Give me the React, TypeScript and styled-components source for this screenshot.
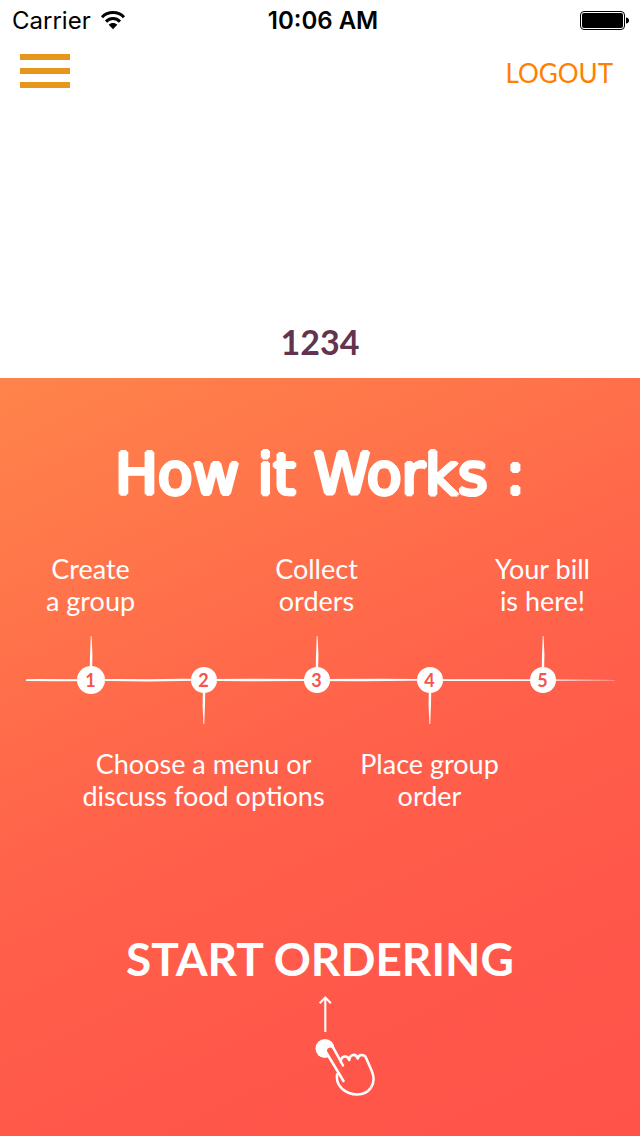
import React from "react";
import styled, { createGlobalStyle } from "styled-components";

const GlobalStyle = createGlobalStyle`
  *, *::before, *::after { box-sizing: border-box; }
  body { margin: 0; background: #ffffff; }
  button { border: 0; padding: 0; background: none; cursor: pointer; }
`;

const lato = `Lato, "Open Sans", sans-serif`;

const Screen = styled.div`
  display: flex;
  flex-direction: column;
  min-height: 100vh;
  font-family: ${lato};
`;

const StatusBar = styled.div`
  display: grid;
  grid-template-columns: 1fr auto 1fr;
  align-items: center;
  height: 42px;
  padding: 0 10px 0 12px;
  font: 400 24px/42px Inter, sans-serif;
  color: #000000;
`;

const Carrier = styled.div`
  display: flex;
  align-items: center;
  gap: 9px;
`;

const Clock = styled.time`
  padding-left: 4px;
  font-weight: 600;
`;

const Battery = styled.svg`
  justify-self: end;
`;

const NavBar = styled.header`
  display: flex;
  align-items: center;
  justify-content: space-between;
  height: 62px;
  padding: 0 27px 0 20px;
`;

const MenuButton = styled.button`
  display: flex;
  flex-direction: column;
  gap: 8px;
  width: 50px;
  margin-bottom: 4px;
`;

const MenuBar = styled.span`
  height: 6px;
  background: #e8951c;
`;

const LogoutButton = styled.button`
  font: 400 26px/32px ${lato};
  color: #ff8000;
`;

const GroupCode = styled.p`
  margin: 213px 0 0;
  padding-bottom: 11px;
  font-size: 34px;
  font-weight: 700;
  line-height: 50px;
  text-align: center;
  color: #633350;
`;

const Panel = styled.main`
  flex: 1;
  display: flex;
  flex-direction: column;
  align-items: center;
  padding: 60px 0 40px;
  color: #ffffff;
  background: linear-gradient(155deg, #ff844a 0%, #ff614a 50%, #ff564a 80%, #ff5349 100%);
`;

/* The ring of shadows thickens the strokes and rounds off their ends. */
const Title = styled.h1`
  margin: 0;
  font: 400 57px/72px "DejaVu Sans", Verdana, sans-serif;
  text-shadow:
    2px 0 #ffffff, -2px 0 #ffffff, 0 2px #ffffff, 0 -2px #ffffff,
    1px 1px #ffffff, -1px 1px #ffffff, 1px -1px #ffffff, -1px -1px #ffffff;
`;

const Steps = styled.ol`
  align-self: stretch;
  display: grid;
  grid-template-columns: repeat(5, minmax(0, 1fr));
  grid-template-rows: auto 88px auto;
  margin: 0;
  padding: 43px 41px 0 34px;
  list-style: none;
`;

const Rail = styled.li`
  grid-area: 2 / 1 / 3 / -1;
  align-self: center;
  height: 4px;
  margin: 0 -16px 0 -8px;

  svg {
    display: block;
    width: 100%;
    height: 100%;
  }
`;

const Step = styled.li<{ $column: number }>`
  grid-column: ${(p) => p.$column};
  grid-row: 1 / -1;
  display: grid;
  grid-template-columns: minmax(0, 1fr);
  grid-template-rows: subgrid;
  justify-items: center;
`;

const StepLabel = styled.span<{ $below: boolean }>`
  grid-row: ${(p) => (p.$below ? 3 : 1)};
  width: max-content;
  padding: ${(p) => (p.$below ? "24px 0 0" : "0 0 19px")};
  font-size: 27px;
  line-height: 32px;
  text-align: center;
  white-space: pre-line;
`;

const Marker = styled.span<{ $below: boolean }>`
  grid-row: 2;
  display: flex;
  flex-direction: ${(p) => (p.$below ? "column" : "column-reverse")};
  align-items: center;
  align-self: ${(p) => (p.$below ? "end" : "start")};
`;

const Badge = styled.span<{ $large: boolean }>`
  width: ${(p) => (p.$large ? 28 : 26)}px;
  margin: ${(p) => (p.$large ? "-1px" : "0")};
  border-radius: 50%;
  background: #ffffff;
  color: #f4554d;
  font-size: 18px;
  font-weight: 700;
  line-height: ${(p) => (p.$large ? 28 : 26)}px;
  text-align: center;
`;

const Stem = styled.svg<{ $below: boolean }>`
  display: block;
  width: 4px;
  height: 31px;
  transform: ${(p) => (p.$below ? "rotate(180deg)" : "none")};
`;

const StartButton = styled.button`
  display: flex;
  flex-direction: column;
  align-items: center;
  gap: 6px;
  margin-top: 117px;
  color: #ffffff;
  font: 700 46px/60px ${lato};
`;

const SwipeIcon = styled.svg`
  display: block;
  margin-left: 50px;
`;

const steps = [
  "Create\na group",
  "Choose a menu or\ndiscuss food options",
  "Collect\norders",
  "Place group\norder",
  "Your bill\nis here!",
];

export default function App() {
  return (
    <Screen>
      <GlobalStyle />
      <StatusBar>
        <Carrier>
          Carrier
          <svg width="26" height="20" viewBox="0 0 26 20" aria-label="Wi-Fi">
            <path d="M2 6.200C8 0 18 0 24 6.200" fill="none" stroke="#000" strokeWidth="3" />
            <path d="M6 10.600c4-4 10-4 14 0" fill="none" stroke="#000" strokeWidth="3" />
            <path d="M8.700 13.800c2.400-2.400 6.200-2.400 8.600 0L13 18.200z" fill="#000" />
          </svg>
        </Carrier>
        <Clock>10:06 AM</Clock>
        <Battery width="50" height="20" viewBox="0 0 50 20" aria-label="Battery full">
          <rect x="0.500" y="0.500" width="44" height="18" rx="3.500" fill="none" stroke="#000" />
          <rect x="2" y="2" width="41" height="15" rx="2" fill="#000" />
          <path d="M46 6.500c2 0 3 1.400 3 3s-1 3-3 3z" fill="#000" />
        </Battery>
      </StatusBar>
      <NavBar>
        <MenuButton aria-label="Menu">
          <MenuBar />
          <MenuBar />
          <MenuBar />
        </MenuButton>
        <LogoutButton>LOGOUT</LogoutButton>
      </NavBar>
      <GroupCode>1234</GroupCode>
      <Panel>
        <Title>How it Works :</Title>
        <Steps>
          <Rail aria-hidden="true">
            <svg viewBox="0 0 588 4" preserveAspectRatio="none">
              <path
                d="M0 1.200L12 1l40 .2 40-.3 30 .4 34-.6 30 .4 40-.4 60 .4 70-.4 60 .5 70 .1 40 .3 62 .4 0 .3-62 .5-40 .2-60 .1-40-.4-50 .6-60-.4-56 .4-50-.5-48 .6-40-.5-50 .3-40-.3L0 2.800z"
                fill="#fff"
              />
            </svg>
          </Rail>
          {steps.map((label, i) => {
            const below = i % 2 === 1;
            return (
              <Step key={label} $column={i + 1}>
                <StepLabel $below={below}>{label}</StepLabel>
                <Marker $below={below}>
                  <Badge $large={i === 0}>{i + 1}</Badge>
                  <Stem $below={below} viewBox="0 0 4 31" aria-hidden="true">
                    <path d="M1.700 0h.8l.5 10 .4 8-.2 13H.8L1 19l.4-9z" fill="#fff" />
                  </Stem>
                </Marker>
              </Step>
            );
          })}
        </Steps>
        <StartButton>
          START ORDERING
          <SwipeIcon width="60" height="102" viewBox="0 0 60 102" fill="none" aria-hidden="true">
            <path d="M10.300 37V2M4.700 8.200l5.600-5.700 5.600 5.700" stroke="#fff" strokeWidth="2.100" />
            <circle cx="10" cy="53.500" r="9.500" fill="#fff" />
            <path
              d="M28.500 86L11.300 57.500C9 53 15.500 48.800 18.500 53.200L28 70.500"
              fill="#ff5749"
            />
            <path
              d="M28.500 86L11.300 57.500C9 53 15.500 48.800 18.500 53.200L28 70.500M25.800 67c.2-6.500 6.500-7.500 8.500-2 .5-6 6.500-7 8.500-1.500 1-5.500 7.500-4 8.500 0l5.500 12.500c5.500 13.500-3 23.500-14.500 23.500S20 91 22.200 79"
              stroke="#fff"
              strokeWidth="2.500"
              strokeLinecap="round"
              strokeLinejoin="round"
            />
          </SwipeIcon>
        </StartButton>
      </Panel>
    </Screen>
  );
}
